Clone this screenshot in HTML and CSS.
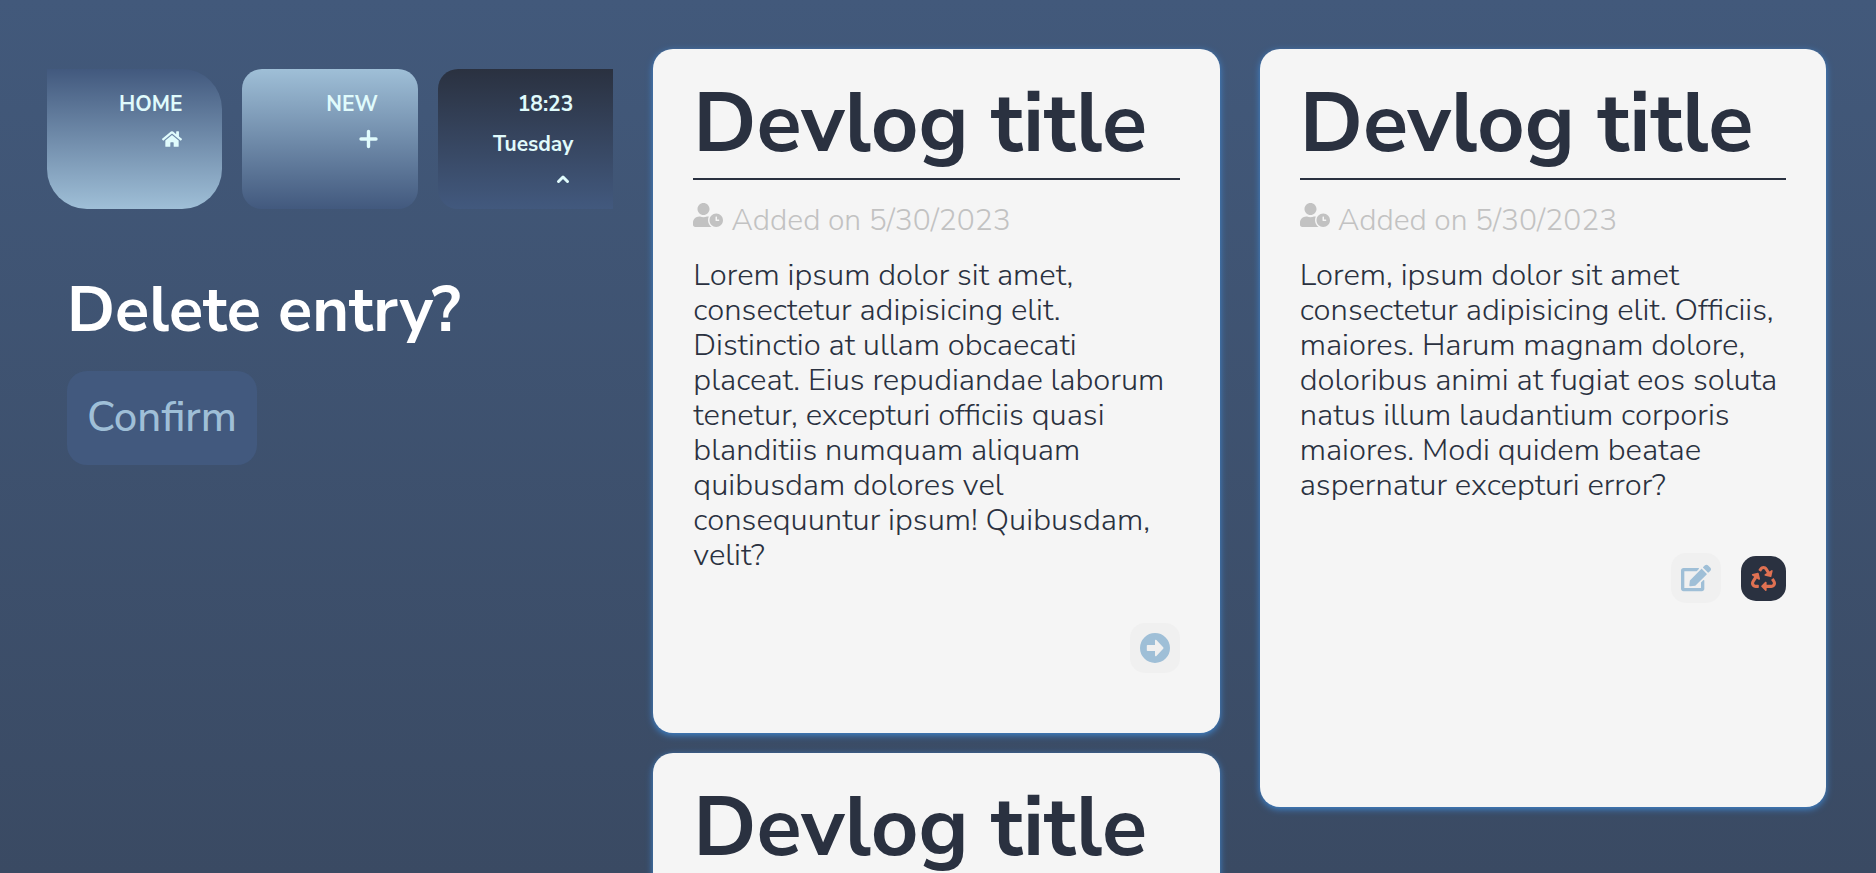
FILE: index.html
```html
<!DOCTYPE html>
<html lang="en">
<head>
<meta charset="utf-8">
<meta name="viewport" content="width=device-width, initial-scale=1">
<title>Devlog</title>
<link rel="stylesheet" href="styles.css">
</head>
<body>
<svg class="defs" aria-hidden="true">
  <symbol id="user-clock" viewBox="0 0 640 512"><path d="M496 224c-79.6 0-144 64.4-144 144s64.4 144 144 144 144-64.4 144-144-64.4-144-144-144zm64 150.3c0 5.3-4.4 9.7-9.7 9.7h-60.6c-5.3 0-9.7-4.4-9.7-9.7v-76.6c0-5.3 4.4-9.7 9.7-9.7h12.6c5.3 0 9.7 4.4 9.7 9.7V352h38.3c5.3 0 9.7 4.4 9.7 9.7v12.6zM320 368c0-27.8 6.7-54.1 18.2-77.5-8-1.5-16.2-2.5-24.6-2.5h-16.7c-22.2 10.2-46.9 16-72.9 16s-50.6-5.8-72.9-16h-16.7C60.2 288 0 348.2 0 422.4V464c0 26.5 21.5 48 48 48h347.1c-45.3-31.9-75.1-84.5-75.1-144zm-96-112c70.7 0 128-57.3 128-128S294.7 0 224 0 96 57.3 96 128s57.3 128 128 128z"/></symbol>
</svg>
<main class="layout">
  <section class="side">
    <nav class="tiles">
      <a class="tile tile-home" href="#home">
        <span>HOME</span>
        <svg class="tile-icon" viewBox="0 0 576 512" aria-hidden="true"><path d="M280.37 148.26L96 300.11V464a16 16 0 0 0 16 16l112.06-.29a16 16 0 0 0 15.92-16V368a16 16 0 0 1 16-16h64a16 16 0 0 1 16 16v95.64a16 16 0 0 0 16 16.05L464 480a16 16 0 0 0 16-16V300L295.67 148.26a12.19 12.19 0 0 0-15.3 0zM571.6 251.47L488 182.56V44.05a12 12 0 0 0-12-12h-56a12 12 0 0 0-12 12v72.61L318.47 43a48 48 0 0 0-61 0L4.34 251.47a12 12 0 0 0-1.6 16.9l25.5 31A12 12 0 0 0 45.15 301l235.22-193.74a12.19 12.19 0 0 1 15.3 0L530.9 301a12 12 0 0 0 16.9-1.6l25.5-31a12 12 0 0 0-1.7-16.93z"/></svg>
      </a>
      <a class="tile tile-new" href="#new">
        <span>NEW</span>
        <svg class="tile-icon" viewBox="0 0 20 20" aria-hidden="true"><path class="line" d="M10.500 2.500v15M3 10h15" stroke-width="3.400"/></svg>
      </a>
      <button class="tile tile-clock" type="button">
        <span>18:23</span>
        <span>Tuesday</span>
        <svg class="tile-icon" viewBox="0 0 20 20" aria-hidden="true"><path class="line" d="M5.500 12.500 10 8l4.500 4.500" stroke-width="3"/></svg>
      </button>
    </nav>
    <div class="prompt">
      <h2 class="prompt-title">Delete entry?</h2>
      <button class="confirm" type="button">Confirm</button>
    </div>
  </section>

  <section class="column">
    <article class="card">
      <h1 class="card-title">Devlog title</h1>
      <p class="card-date"><svg class="date-icon" aria-hidden="true"><use href="#user-clock"/></svg>Added on 5/30/2023</p>
      <p class="card-text">Lorem ipsum dolor sit amet, consectetur adipisicing elit. Distinctio at ullam obcaecati placeat. Eius repudiandae laborum tenetur, excepturi officiis quasi blanditiis numquam aliquam quibusdam dolores vel consequuntur ipsum! Quibusdam, velit?</p>
      <div class="actions">
        <button class="action" type="button" aria-label="Open entry"><svg class="action-icon" viewBox="0 0 30 30" aria-hidden="true"><path fill-rule="evenodd" d="M15 0a15 15 0 1 0 0 30 15 15 0 0 0 0-30zM7 12h8V7.500a.8.8 0 0 1 1.400-.5l6.800 7.300a1 1 0 0 1 0 1.400L16.400 23a.8.8 0 0 1-1.400-.5V18H7.500a.7.7 0 0 1-.7-.7v-4.600a.7.7 0 0 1 .7-.7z"/></svg></button>
      </div>
    </article>
    <article class="card">
      <h1 class="card-title">Devlog title</h1>
    </article>
  </section>

  <section class="column">
    <article class="card card-selected">
      <h1 class="card-title">Devlog title</h1>
      <p class="card-date"><svg class="date-icon" aria-hidden="true"><use href="#user-clock"/></svg>Added on 5/30/2023</p>
      <p class="card-text">Lorem, ipsum dolor sit amet consectetur adipisicing elit. Officiis, maiores. Harum magnam dolore, doloribus animi at fugiat eos soluta natus illum laudantium corporis maiores. Modi quidem beatae aspernatur excepturi error?</p>
      <div class="actions">
        <button class="action" type="button" aria-label="Edit entry"><svg class="action-icon" viewBox="0 0 576 512" aria-hidden="true"><path d="M402.6 83.2l90.2 90.2c3.8 3.8 3.8 10 0 13.8L274.4 405.6l-92.8 10.3c-12.4 1.4-22.9-9.1-21.5-21.5l10.3-92.8L388.8 83.2c3.8-3.8 10-3.8 13.8 0zm162-22.9l-48.8-48.8c-15.2-15.2-39.9-15.2-55.2 0l-35.4 35.4c-3.8 3.8-3.8 10 0 13.8l90.2 90.2c3.8 3.8 10 3.8 13.8 0l35.4-35.4c15.2-15.3 15.2-40 0-55.2zM384 346.2V448H64V128h229.8c3.2 0 6.2-1.3 8.5-3.5l40-40c7.6-7.6 2.2-20.5-8.5-20.5H48C21.5 64 0 85.5 0 112v352c0 26.5 21.5 48 48 48h352c26.5 0 48-21.5 48-48V306.2c0-10.7-12.9-16-20.5-8.5l-40 40c-2.2 2.3-3.5 5.3-3.5 8.5z"/></svg></button>
        <button class="action action-delete" type="button" aria-label="Delete entry"><svg class="action-icon" viewBox="0 0 512 512" aria-hidden="true"><path d="M184.561 261.903c3.232 13.997-12.123 24.635-24.068 17.168l-40.736-25.455-50.867 81.402C55.606 356.273 70.96 384 96.012 384H148c6.627 0 12 5.373 12 12v40c0 6.627-5.373 12-12 12H96.115c-75.334 0-121.302-83.048-81.408-146.88l50.822-81.388-40.725-25.448c-12.081-7.547-8.966-25.961 4.879-29.158l110.237-25.45c8.611-1.988 17.201 3.381 19.189 11.99l25.452 110.237zm98.561-182.915l41.289 66.076-40.74 25.457c-12.051 7.528-9 25.953 4.879 29.158l110.237 25.45c8.672 1.999 17.215-3.438 19.189-11.99l25.45-110.237c3.197-13.844-11.99-24.719-24.068-17.168l-40.687 25.424-41.263-66.082c-37.521-60.033-125.209-60.171-162.816 0l-17.963 28.766c-3.51 5.62-1.8 13.021 3.82 16.533l33.919 21.195c5.62 3.512 13.024 1.803 16.536-3.817l17.961-28.743c12.712-20.341 41.973-19.676 54.257-.022zM497.288 301.12l-27.515-44.065c-3.511-5.623-10.916-7.334-16.538-3.821l-33.861 21.159c-5.62 3.512-7.33 10.915-3.818 16.536l27.564 44.112c13.257 21.211-2.057 48.96-27.136 48.96H320V336.02c0-14.213-17.242-21.383-27.313-11.313l-80 79.981c-6.249 6.248-6.249 16.379 0 22.627l80 79.989C302.689 517.308 320 510.3 320 495.989V448h95.88c75.274 0 121.335-82.997 81.408-146.88z"/></svg></button>
      </div>
    </article>
  </section>
</main>
</body>
</html>
```
FILE: styles.css
```css
:root {
  --blue: #42597e;
  --sky: #9fbfd7;
  --dark: #2a3140;
  --ice: #e0fbfc;
}

* {
  box-sizing: border-box;
}

html,
body {
  height: 100%;
}

body {
  margin: 0;
  overflow: hidden;
  background: linear-gradient(#42597b, #3a4a63);
  color: var(--dark);
  font-family: "Nunito Sans", Nunito, "Open Sans", sans-serif;
}

button {
  border: 0;
  font-family: inherit;
}

h1,
h2,
p {
  margin: 0;
}

svg {
  fill: currentColor;
}

.defs {
  display: none;
}

.line {
  fill: none;
  stroke: currentColor;
  stroke-linecap: round;
  stroke-linejoin: round;
}

.layout {
  display: grid;
  grid-template-columns: repeat(3, minmax(0, 1fr));
  align-items: start;
  gap: 40px;
  padding: 49px 50px 0 47px;
}

.side {
  display: flex;
  flex-direction: column;
  gap: 66px;
  padding-top: 20px;
}

.tiles {
  display: grid;
  grid-template-columns: repeat(3, minmax(0, 1fr));
  gap: 20px;
}

.tile {
  display: flex;
  flex-direction: column;
  align-items: flex-end;
  justify-content: flex-start;
  gap: 10px;
  min-height: 140px;
  padding: 20px 40px 18px;
  color: var(--ice);
  font-size: 21px;
  font-weight: 700;
  line-height: 30px;
  text-decoration: none;
}

.tile-home {
  border-radius: 0 40px 40px 40px;
  background: linear-gradient(var(--blue), var(--sky));
}

.tile-new {
  border-radius: 20px;
  background: linear-gradient(var(--sky), var(--blue));
}

.tile-clock {
  border-radius: 20px 0 0 20px;
  background: linear-gradient(var(--dark), var(--blue));
}

.tile-icon {
  flex: none;
  width: 20px;
  height: 20px;
}

.prompt {
  display: flex;
  flex-direction: column;
  align-items: flex-start;
  gap: 26px;
  padding-left: 20px;
}

.prompt-title {
  color: #fff;
  font-size: 63px;
  font-weight: 700;
  line-height: 70px;
}

.confirm {
  padding: 20px;
  border-radius: 20px;
  background: var(--blue);
  color: var(--sky);
  font-size: 42px;
  font-weight: 500;
  line-height: 54px;
}

.column {
  display: flex;
  flex-direction: column;
  gap: 20px;
}

.card {
  padding: 30px 40px 60px;
  border-radius: 20px;
  background: #f5f5f5;
  box-shadow: 0 2px 7px #3f86d0;
}

.card-selected {
  min-height: 758px;
}

.card-title {
  padding-bottom: 9px;
  border-bottom: 2px solid var(--dark);
  font-size: 83px;
  font-weight: 700;
  line-height: 90px;
}

.card-date {
  display: flex;
  align-items: flex-start;
  gap: 8px;
  padding: 23px 0 19px;
  color: #c2c2c2;
  font-size: 30px;
  font-weight: 350;
  line-height: 36px;
}

.date-icon {
  flex: none;
  width: 30px;
  height: 24px;
}

.card-text {
  font-size: 31px;
  font-weight: 350;
  line-height: 35px;
}

.actions {
  display: flex;
  align-items: center;
  justify-content: flex-end;
  gap: 20px;
  min-height: 50px;
  margin-top: 50px;
}

.action {
  display: grid;
  place-items: center;
  width: 50px;
  height: 50px;
  padding: 10px;
  border-radius: 15px;
  background: #f0f0f0;
  color: var(--sky);
}

.action-delete {
  width: 45px;
  height: 45px;
  background: var(--dark);
  color: #e07152;
}

.action-icon {
  width: 100%;
  height: 100%;
}
```
